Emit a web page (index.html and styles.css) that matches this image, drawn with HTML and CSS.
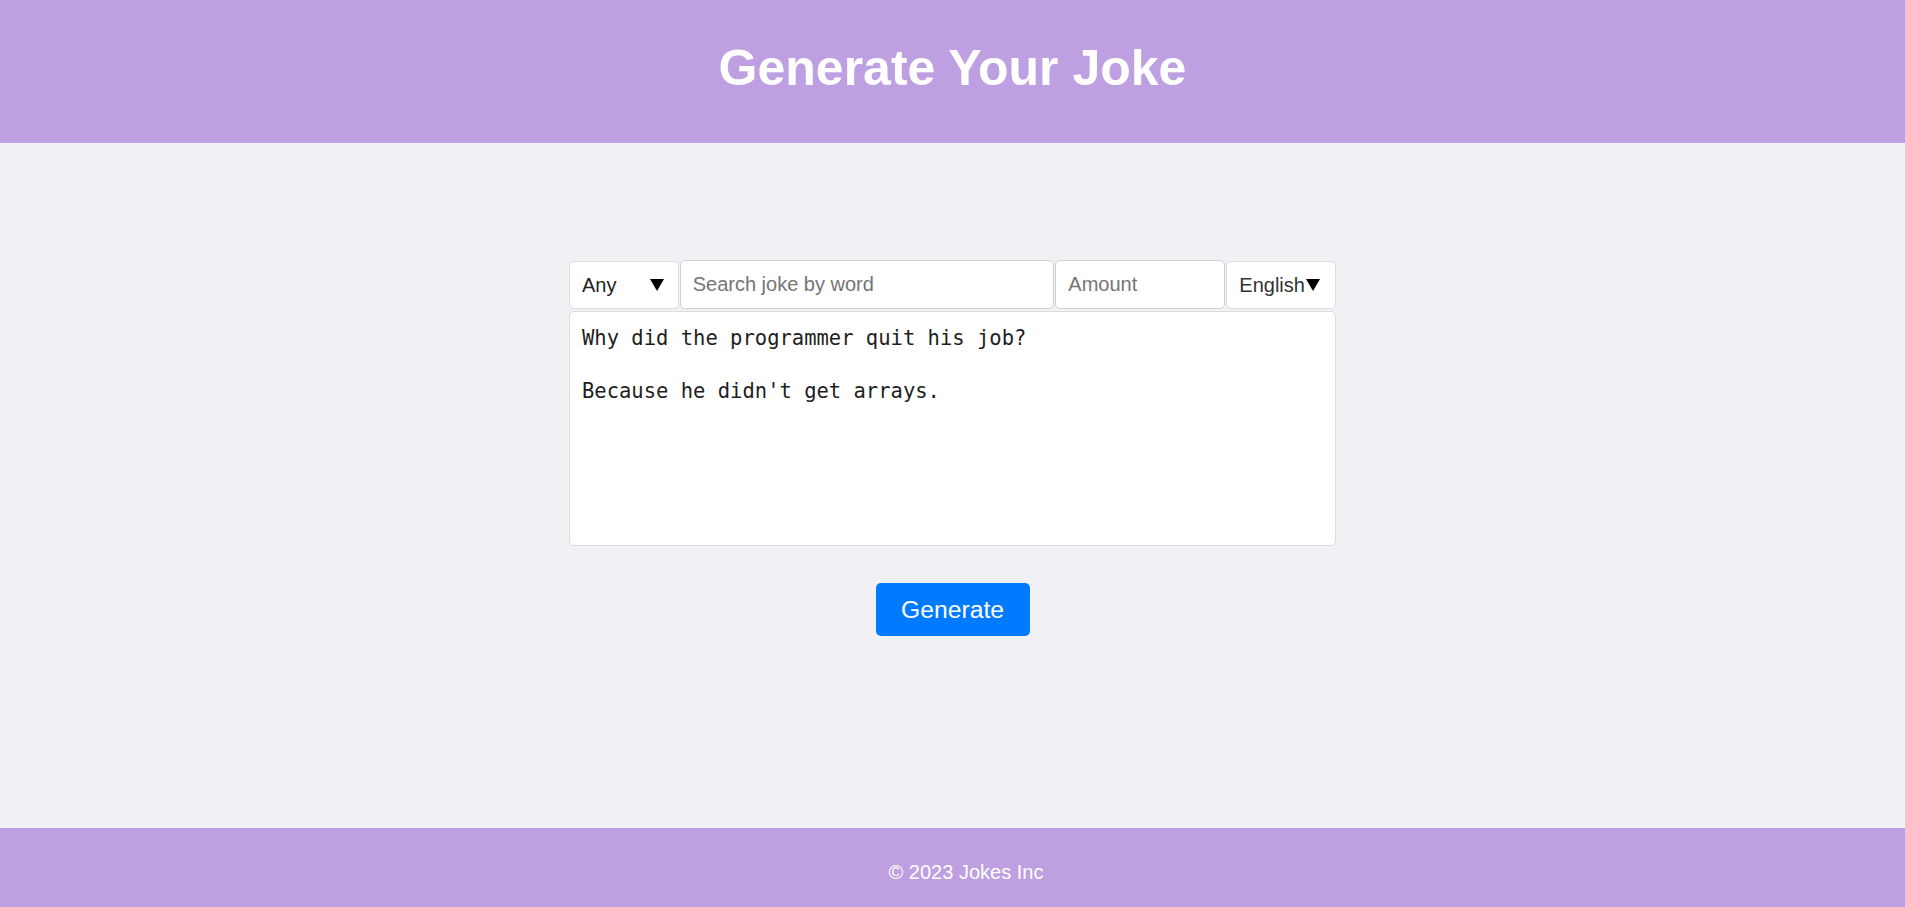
FILE: index.html
```html
<!DOCTYPE html>
<html lang="en">
<head>
<meta charset="utf-8">
<title>Generate Your Joke</title>
<link rel="stylesheet" href="styles.css">
</head>
<body>
<div class="page">
  <header class="site-header">
    <h1 class="title">Generate Your Joke</h1>
  </header>
  <main class="main">
    <div class="joke-box">
      <div class="controls">
        <div class="select select-category">
          <span>Any</span>
          <svg class="arrow" width="14" height="12" viewBox="0 0 14 12"><polygon points="0,0 14,0 7,12" fill="#000"/></svg>
        </div>
        <input class="field field-search" type="text" placeholder="Search joke by word">
        <input class="field field-amount" type="text" placeholder="Amount">
        <div class="select select-lang">
          <span>English</span>
          <svg class="arrow" width="14" height="12" viewBox="0 0 14 12"><polygon points="0,0 14,0 7,12" fill="#000"/></svg>
        </div>
      </div>
      <div class="joke-output">Why did the programmer quit his job?

Because he didn't get arrays.</div>
    </div>
    <button class="generate-btn" type="button">Generate</button>
  </main>
  <footer class="site-footer">© 2023 Jokes Inc</footer>
</div>
</body>
</html>
```

FILE: styles.css
```css
* {
  box-sizing: border-box;
}

html, body {
  margin: 0;
  padding: 0;
}

body {
  font-family: "Liberation Sans", Arial, sans-serif;
  background: #f0f0f5;
  color: #222;
}

.page {
  min-height: 907px;
  display: flex;
  flex-direction: column;
}

.site-header {
  background: #be9fe1;
  padding: 41px 0 47px;
  text-align: center;
}

.title {
  margin: 0;
  font-size: 50px;
  line-height: 55px;
  font-weight: bold;
  color: #fff;
}

.main {
  flex: 1;
  display: flex;
  flex-direction: column;
  align-items: center;
  padding-top: 117px;
}

.joke-box {
  width: 767px;
  display: flex;
  flex-direction: column;
  gap: 2px;
}

.controls {
  display: flex;
  align-items: flex-end;
  gap: 1px;
  height: 49px;
}

.select {
  width: 110px;
  height: 48px;
  background: #fff;
  border: 1px solid #dcdcdc;
  border-radius: 5px;
  display: flex;
  align-items: center;
  justify-content: space-between;
  padding: 0 14px 0 12px;
  font-size: 20px;
  color: #222;
}

.select-lang {
  justify-content: flex-start;
  padding: 0 12px 0 12px;
  color: #333;
}

.select-lang .arrow {
  margin-left: 1px;
}

.arrow {
  display: block;
  flex: none;
}

.field {
  height: 49px;
  background: #fff;
  border: 1px solid #cfcfcf;
  border-radius: 5px;
  padding: 0 12px;
  font-family: "Liberation Sans", Arial, sans-serif;
  font-size: 20px;
  color: #222;
  outline: none;
}

.field::placeholder {
  color: #757575;
}

.field-search {
  width: 376px;
}

.field-amount {
  width: 170px;
}

.joke-output {
  height: 235px;
  background: #fff;
  border: 1px solid #dcdcdc;
  border-radius: 5px;
  padding: 13px 12px;
  font-family: "DejaVu Sans Mono", "Liberation Mono", monospace;
  font-size: 20.5px;
  line-height: 26.7px;
  white-space: pre-wrap;
  color: #1e1e1e;
}

.generate-btn {
  margin-top: 37px;
  width: 154px;
  height: 53px;
  background: #007bff;
  color: #fff;
  border: none;
  border-radius: 5px;
  font-family: "Liberation Sans", Arial, sans-serif;
  font-size: 24.7px;
  padding: 0;
  cursor: pointer;
}

.site-footer {
  background: #be9fe1;
  color: #fff;
  text-align: center;
  font-size: 20px;
  line-height: 23px;
  padding: 33px 0 23px 27px;
}
```
